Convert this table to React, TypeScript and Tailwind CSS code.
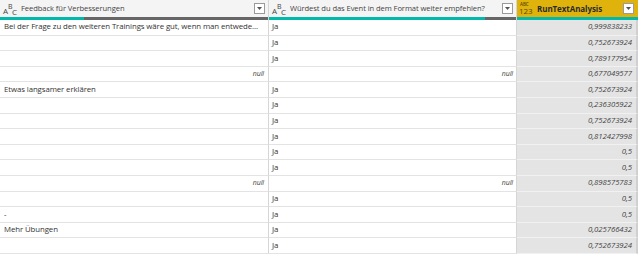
import React from 'react';

type Row = {
  feedback: string;
  feedbackNull?: boolean;
  recommend: string;
  recommendNull?: boolean;
  score: string;
};

const rows: Row[] = [
  { feedback: 'Bei der Frage zu den weiteren Trainings wäre gut, wenn man entwede...', recommend: 'Ja', score: '0,999838233' },
  { feedback: '', recommend: 'Ja', score: '0,752673924' },
  { feedback: '', recommend: 'Ja', score: '0,789177954' },
  { feedback: 'null', feedbackNull: true, recommend: 'null', recommendNull: true, score: '0,677049577' },
  { feedback: 'Etwas langsamer erklären', recommend: 'Ja', score: '0,752673924' },
  { feedback: '', recommend: 'Ja', score: '0,236305922' },
  { feedback: '', recommend: 'Ja', score: '0,752673924' },
  { feedback: '', recommend: 'Ja', score: '0,812427998' },
  { feedback: '', recommend: 'Ja', score: '0,5' },
  { feedback: '', recommend: 'Ja', score: '0,5' },
  { feedback: 'null', feedbackNull: true, recommend: 'null', recommendNull: true, score: '0,898575783' },
  { feedback: '', recommend: 'Ja', score: '0,5' },
  { feedback: '-', recommend: 'Ja', score: '0,5' },
  { feedback: 'Mehr Übungen', recommend: 'Ja', score: '0,025766432' },
  { feedback: '', recommend: 'Ja', score: '0,752673924' },
];

// "ABC" text type glyph: A on the line, B raised, C lowered
const TextTypeIcon: React.FC = () => (
  <span className="relative inline-block w-[15px] h-[12px] text-[#444] leading-none shrink-0">
    <span className="absolute left-0 top-[4px] text-[8px]">A</span>
    <span className="absolute left-[5px] top-0 text-[7px]">B</span>
    <span className="absolute left-[9px] top-[5px] text-[8px]">C</span>
  </span>
);

// "ABC / 123" any type glyph
const AnyTypeIcon: React.FC = () => (
  <span className="relative inline-block w-[15px] h-[13px] leading-none text-[#5a4a00] shrink-0">
    <span className="absolute left-[1px] top-0 text-[4.5px] font-semibold">ABC</span>
    <span className="absolute left-0 top-[5px] text-[8px]">123</span>
  </span>
);

const DropButton: React.FC = () => (
  <span className="flex items-center justify-center w-[11px] h-[11px] bg-white border border-[#9a9a9a] shrink-0">
    <svg width="5" height="3" viewBox="0 0 5 3">
      <path d="M0 0 L5 0 L2.5 3 Z" fill="#555" />
    </svg>
  </span>
);

const App: React.FC = () => {
  return (
    <div
      className="w-[638px] h-[256px] overflow-hidden bg-white text-[#333] text-[7.8px] tracking-[-0.08px]"
      style={{ fontFamily: '"Open Sans", "Noto Sans", sans-serif' }}
    >
      {/* Header */}
      <div className="flex h-[17px] text-[7.6px]">
        <div className="flex items-center w-[269px] bg-[#f4f4f4] border-r border-[#d6d6d6] pl-[3px] pr-[3px] gap-[3px]">
          <TextTypeIcon />
          <span className="flex-1 whitespace-nowrap overflow-hidden text-[#444]">Feedback für Verbesserungen</span>
          <DropButton />
        </div>
        <div className="flex items-center w-[248px] bg-[#f4f4f4] border-r border-[#d6d6d6] pl-[3px] pr-[3px] gap-[3px]">
          <TextTypeIcon />
          <span className="flex-1 whitespace-nowrap overflow-hidden text-[#444]">Würdest du das Event in dem Format weiter empfehlen?</span>
          <DropButton />
        </div>
        <div className="flex items-center flex-1 bg-[#dfb30c] pl-[2px] pr-[4px] gap-[3px]">
          <AnyTypeIcon />
          <span className="flex-1 whitespace-nowrap overflow-hidden font-bold text-[8px] text-[#2b2b2b]">RunTextAnalysis</span>
          <DropButton />
        </div>
      </div>

      {/* Quality bars */}
      <div className="flex h-[3px]">
        <div className="flex w-[269px] border-r border-[#d6d6d6]">
          <div className="w-[84px] bg-[#01b8aa]" />
          <div className="flex-1 bg-[#666]" />
        </div>
        <div className="flex w-[248px] border-r border-[#d6d6d6]">
          <div className="w-[216px] bg-[#01b8aa]" />
          <div className="flex-1 bg-[#666]" />
        </div>
        <div className="flex-1 bg-[#01b8aa]" />
      </div>

      {/* Rows */}
      {rows.map((r, i) => (
        <div key={i} className="flex h-[15.6px]">
          <div
            className={`flex items-center w-[269px] border-r border-b border-r-[#d6d6d6] border-b-[#e3e3e3] px-[4px] overflow-hidden ${
              r.feedbackNull ? 'justify-end' : ''
            }`}
          >
            {r.feedbackNull ? (
              <span className="italic text-[7px] text-[#444]">null</span>
            ) : (
              <span className="whitespace-nowrap">{r.feedback}</span>
            )}
          </div>
          <div
            className={`flex items-center w-[248px] border-r border-b border-r-[#d6d6d6] border-b-[#e3e3e3] px-[3px] ${
              r.recommendNull ? 'justify-end' : ''
            }`}
          >
            {r.recommendNull ? (
              <span className="italic text-[7px] text-[#444]">null</span>
            ) : (
              <span>{r.recommend}</span>
            )}
          </div>
          <div className="flex items-center justify-end flex-1 bg-[#e4e4e4] border-b border-[#f1f1f1] border-r-2 border-r-[#d0d0d0] pr-[4px]">
            <span className="italic text-[#444]">{r.score}</span>
          </div>
        </div>
      ))}
    </div>
  );
};

export default App;
